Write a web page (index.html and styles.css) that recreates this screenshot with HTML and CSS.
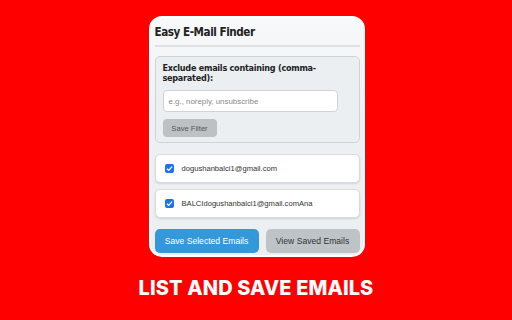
FILE: index.html
```html
<!DOCTYPE html>
<html>
<head>
<meta charset="utf-8">
<link rel="stylesheet" href="styles.css">
</head>
<body>
<div class="stage">
  <div class="card">
    <h1 class="title">Easy E-Mail Finder</h1>
    <div class="filter">
      <div class="label">Exclude emails containing (comma-separated):</div>
      <div class="input">e.g., noreply, unsubscribe</div>
      <div class="btn-filter">Save Filter</div>
    </div>
    <div class="row"><span class="check"><svg viewBox="0 0 10 10" width="9" height="9"><path d="M2.2 5.2 L4.1 7.1 L7.9 2.9" fill="none" stroke="#fff" stroke-width="1.5"/></svg></span><span class="email">dogushanbalci1@gmail.com</span></div>
    <div class="row"><span class="check"><svg viewBox="0 0 10 10" width="9" height="9"><path d="M2.2 5.2 L4.1 7.1 L7.9 2.9" fill="none" stroke="#fff" stroke-width="1.5"/></svg></span><span class="email">BALCIdogushanbalci1@gmail.comAna</span></div>
    <div class="actions">
      <div class="btn btn-blue">Save Selected Emails</div>
      <div class="btn btn-gray">View Saved Emails</div>
    </div>
  </div>
  <div class="caption">LIST AND SAVE EMAILS</div>
</div>
</body>
</html>
```
FILE: styles.css
```css
html, body { margin: 0; padding: 0; }
body { background: #ff0000; width: 512px; height: 320px; overflow: hidden; }
.stage { display: flex; flex-direction: column; align-items: center; padding-top: 16px; }
.card {
  box-sizing: border-box;
  width: 216px;
  height: 241px;
  margin-left: 1px;
  border: 2px solid #ffffff;
  border-radius: 13px;
  background: linear-gradient(#f8f9fa, #eef1f3 40%, #eceff1);
  padding: 0 3px 0 4px;
  display: flex;
  flex-direction: column;
}
.title {
  font-family: "DejaVu Sans Condensed", "DejaVu Sans", sans-serif;
  font-weight: bold;
  font-size: 11.6px;
  letter-spacing: -0.45px;
  color: #222;
  margin: 6px 0 0 0;
  line-height: 16px;
  padding-bottom: 5px;
  border-bottom: 2px solid #dfe2e5;
}
.filter {
  margin-top: 9px;
  border: 1px solid #cfd3d7;
  border-radius: 5px;
  background: #eceff2;
  padding: 6px 8px 6px 7px;
  height: 73px;
}
.label {
  font-family: "DejaVu Sans Condensed", "DejaVu Sans", sans-serif;
  font-weight: bold;
  font-size: 9px;
  letter-spacing: -0.25px;
  line-height: 10px;
  color: #222;
  width: 175px;
}
.input {
  box-sizing: border-box;
  margin-top: 7px;
  width: 175px;
  height: 22px;
  background: #fff;
  border: 1px solid #cfd3d7;
  border-radius: 4px;
  font-family: "Liberation Sans", Arial, sans-serif;
  font-size: 7.9px;
  color: #8a8a8a;
  padding-left: 5px;
  display: flex;
  align-items: center;
}
.btn-filter {
  margin-top: 7px;
  width: 54px;
  height: 18px;
  border-radius: 4px;
  background: #bdc1c4;
  color: #555;
  font-family: "Liberation Sans", Arial, sans-serif;
  font-size: 7.6px;
  display: flex;
  align-items: center;
  justify-content: center;
}
.row {
  box-sizing: border-box;
  margin-top: 11px;
  height: 29px;
  background: #fff;
  border: 1px solid #d9dcdf;
  border-radius: 5px;
  box-shadow: 0 1px 2px rgba(0,0,0,0.12);
  display: flex;
  align-items: center;
  padding-left: 9px;
}
.row + .row { margin-top: 6px; }
.check {
  width: 9px;
  height: 9px;
  border-radius: 2px;
  background: #1a73e8;
  display: flex;
  align-items: center;
  justify-content: center;
}
.check svg { display: block; }
.email {
  margin-left: 8px;
  font-family: "Liberation Sans", Arial, sans-serif;
  font-size: 7.6px;
  color: #333;
}
.actions {
  margin-top: 11px;
  display: flex;
  gap: 7px;
}
.btn {
  height: 24px;
  border-radius: 5px;
  display: flex;
  align-items: center;
  justify-content: center;
  font-family: "Liberation Sans", Arial, sans-serif;
  font-size: 8.6px;
}
.btn-blue { width: 104px; background: #3498db; color: #fff; }
.btn-gray { flex: 1; background: #bdc3c7; color: #333; }
.caption {
  margin-top: 19px;
  font-family: Inter, sans-serif;
  font-weight: 800;
  font-size: 20px;
  color: #fff;
  letter-spacing: 0.1px;
}
```
